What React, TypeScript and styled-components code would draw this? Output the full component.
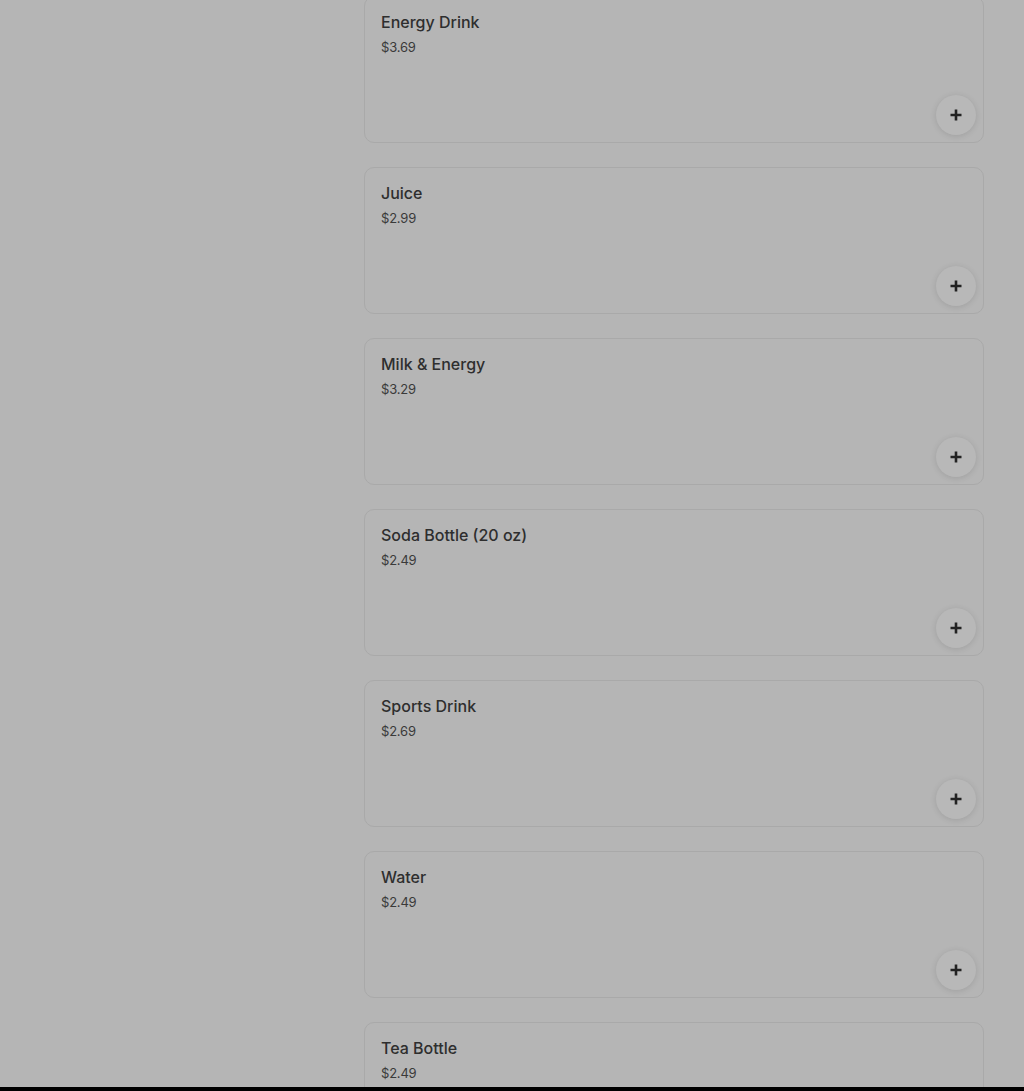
import React from "react";
import styled, { createGlobalStyle } from "styled-components";

const Global = createGlobalStyle`
  html, body { margin: 0; padding: 0; background: #b5b5b5; }
  body { font-family: Inter, "Noto Sans", Roboto, sans-serif; overflow: hidden; }
`;

const Page = styled.div`
  display: grid;
  grid-template-columns: 1fr 620px;
  padding-right: 40px;
  height: 1091px;
  overflow: hidden;
`;

const Side = styled.div``;

const List = styled.div`
  display: flex;
  flex-direction: column;
  gap: 24px;
  margin-top: -4px;
`;

const Card = styled.div`
  box-sizing: border-box;
  height: 147px;
  border: 1px solid #a9a9a9;
  border-radius: 10px;
  display: flex;
  flex-direction: column;
  background: #b5b5b5;
`;

const Info = styled.div`
  padding: 15px 16px 0;
  display: flex;
  flex-direction: column;
  gap: 5px;
`;

const Title = styled.div`
  font-size: 16px;
  line-height: 20px;
  font-weight: 500;
  color: #2e2e2e;
`;

const Price = styled.div`
  font-size: 13px;
  line-height: 20px;
  letter-spacing: -0.2px;
  color: #3a3a3a;
`;

const Footer = styled.div`
  margin-top: auto;
  display: flex;
  justify-content: flex-end;
  padding: 0 7px 7px;
`;

const AddButton = styled.button`
  width: 40px;
  height: 40px;
  border-radius: 50%;
  border: none;
  padding: 0;
  background: #b8b8b8;
  box-shadow: 0 1px 6px rgba(0, 0, 0, 0.12);
  display: flex;
  align-items: center;
  justify-content: center;
  cursor: pointer;
`;

const BottomBar = styled.div`
  position: fixed;
  left: 0;
  right: 0;
  bottom: 0;
  height: 4px;
  background: #000;
`;

const items = [
  { name: "Energy Drink", price: "$3.69" },
  { name: "Juice", price: "$2.99" },
  { name: "Milk & Energy", price: "$3.29" },
  { name: "Soda Bottle (20 oz)", price: "$2.49" },
  { name: "Sports Drink", price: "$2.69" },
  { name: "Water", price: "$2.49" },
  { name: "Tea Bottle", price: "$2.49" },
];

const Plus = () => (
  <svg width="14" height="14" viewBox="0 0 14 14">
    <path d="M7 1.5v11M1.5 7h11" stroke="#222" strokeWidth="2.6" fill="none" />
  </svg>
);

export default function App() {
  return (
    <>
      <Global />
      <Page>
        <Side />
        <List>
          {items.map((it) => (
            <Card key={it.name}>
              <Info>
                <Title>{it.name}</Title>
                <Price>{it.price}</Price>
              </Info>
              <Footer>
                <AddButton aria-label={`Add ${it.name}`}>
                  <Plus />
                </AddButton>
              </Footer>
            </Card>
          ))}
        </List>
      </Page>
      <BottomBar />
    </>
  );
}
